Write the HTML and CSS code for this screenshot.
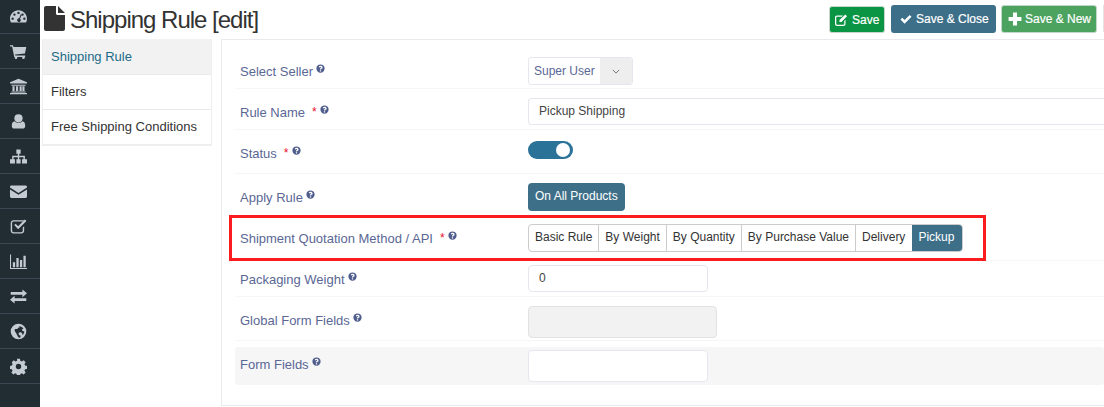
FILE: index.html
```html
<!DOCTYPE html>
<html lang="en">
<head>
<meta charset="utf-8">
<title>Shipping Rule [edit]</title>
<link rel="stylesheet" href="styles.css">
</head>
<body>
<svg class="defs" width="0" height="0" aria-hidden="true">
  <symbol id="help" viewBox="0 0 24 24"><path fill-rule="evenodd" d="M12 1a11 11 0 1 0 0 22 11 11 0 0 0 0-22zM10.300 16.500h3.400v3.300h-3.400zM12 4.500c3 0 5.500 1.800 5.500 4.600 0 2-1.100 3-2.400 3.800-.9.600-1.400 1-1.400 1.900h-3.400c0-2.300.9-3.200 2.200-4 .9-.6 1.500-1 1.500-1.700 0-.8-.8-1.400-1.800-1.400-1.100 0-1.900.6-2.600 1.500L7.200 7.100C8.300 5.500 9.900 4.500 12 4.500z"/></symbol>
</svg>
<div class="app">
  <nav class="rail">
    <a class="rail-item"><svg viewBox="0 0 24 24"><path fill-rule="evenodd" d="M12 3C5.400 3 0 8.300 0 15c0 2 .5 3.900 1.400 5.500h21.200c.9-1.600 1.400-3.500 1.400-5.500 0-6.700-5.400-12-12-12zM12 5.200a1.700 1.700 0 1 1 0 3.400 1.700 1.700 0 0 1 0-3.400zM6.300 7.600a1.700 1.700 0 1 1 0 3.400 1.700 1.700 0 0 1 0-3.400zM17.700 7.600a1.700 1.700 0 1 1 0 3.400 1.700 1.700 0 0 1 0-3.400zM3.700 13.300a1.700 1.700 0 1 1 0 3.400 1.700 1.700 0 0 1 0-3.400zM20.300 13.300a1.700 1.700 0 1 1 0 3.400 1.700 1.700 0 0 1 0-3.400zM15.400 8.300l1.300.5-2.500 6.300a2.600 2.600 0 1 1-1.300-.5z"/></svg></a>
    <a class="rail-item"><svg viewBox="0 0 24 24"><path d="M0 3h4.300l.6 2.500H23l-1.900 9.300-14 1.400.3 1.500h14v2H6L3 5H0z"/><circle cx="8.500" cy="20.800" r="1.900"/><circle cx="19" cy="20.800" r="1.900"/></svg></a>
    <a class="rail-item"><svg viewBox="0 0 24 24"><path d="M12 1 0 6v1.800h24V6zM2 9.500h20V11H2zM3.500 11.500h3v7h-3zM8.500 11.500h3v7h-3zM13.500 11.500h3v7h-3zM17.500 11.500h3v7h-3zM2 19h20v1.600H2zM0 21.200h24V23H0z"/></svg></a>
    <a class="rail-item"><svg viewBox="0 0 24 24"><circle cx="12" cy="7.500" r="5.800"/><path d="M6.500 11.500c1.400 1.500 3.300 2.300 5.500 2.300s4.100-.8 5.500-2.300c2.500.3 4 2.500 4 6.500 0 2.800-1.600 4-3.600 4H6.100c-2 0-3.600-1.200-3.600-4 0-4 1.500-6.200 4-6.500z"/></svg></a>
    <a class="rail-item"><svg viewBox="0 0 24 24"><path d="M9 2h6v6h-2v3h8v5h3v6h-7v-6h2v-3h-6v3h2v6H9v-6h2v-3H5v3h2v6H0v-6h3v-5h8V8H9z"/></svg></a>
    <a class="rail-item"><svg viewBox="0 0 24 24"><path d="M2 3.500h20c1.100 0 2 .9 2 2v1L12 14 0 6.500v-1c0-1.100.9-2 2-2zM0 9l12 7.500L24 9v10c0 1.100-.9 2-2 2H2c-1.100 0-2-.9-2-2z"/></svg></a>
    <a class="rail-item"><svg viewBox="0 0 24 24"><path d="M5 3h13c.7 0 1.300.1 1.900.4l-1.600 1.600H5c-1.100 0-2 .9-2 2v11c0 1.100.9 2 2 2h11c1.100 0 2-.9 2-2v-4.500l2-2V18c0 2.200-1.800 4-4 4H5c-2.200 0-4-1.800-4-4V7c0-2.200 1.800-4 4-4z"/><path d="m6 10 2-2 3.500 3.500L21 2l2.200 2.200L11.500 16z"/></svg></a>
    <a class="rail-item"><svg viewBox="0 0 24 24"><path d="M0 2h1.500v19H24v1.500H0zM4 13h3.200v7H4zM9 7h3.200v13H9zM14 10h3.200v10H14zM19 4h3.200v16H19z"/></svg></a>
    <a class="rail-item"><svg viewBox="0 0 24 24"><path d="M17.500 2 24 7.500 17.500 13V9.500H1v-4h16.500zM6.500 11v3.500H23v4H6.500V22L0 16.500z"/></svg></a>
    <a class="rail-item"><svg viewBox="0 0 24 24"><path fill-rule="evenodd" d="M12 1a11 11 0 1 0 0 22 11 11 0 0 0 0-22zM13 4.500c2.500.1 4.900 1.500 6.100 3.500l-1.600.6-.7 1.300 1.400 1.600 1.800.2c.4 1.100-.3 3-1.300 4.500l-1.500.5.200-2-1.900-1.700-2.600.5-1 1.800 1.600 2.400 1.700-.1-.6 2.700-2 .6c-1.400-1.300-2.600-3.500-3.200-5.200L6.500 11 7 8.500l3.500-.2.800-1.500 2.100-.3z"/></svg></a>
    <a class="rail-item"><svg viewBox="0 0 24 24"><path fill-rule="evenodd" d="M10 1h4l.6 3 2.100.9 2.600-1.700 2.800 2.800-1.700 2.600.9 2.100 3 .6v4l-3 .6-.9 2.100 1.700 2.600-2.800 2.800-2.600-1.700-2.100.9-.6 3h-4l-.6-3-2.100-.9-2.600 1.700-2.800-2.800 1.700-2.600-.9-2.100-3-.6v-4l3-.6.900-2.100L2.500 6l2.800-2.800 2.600 1.700 2.100-.9zM12 8.200a3.800 3.800 0 1 0 0 7.600 3.800 3.800 0 0 0 0-7.600z"/></svg></a>
  </nav>
  <div class="main">
    <header class="topbar">
      <h1 class="title"><svg class="title-icon" viewBox="0 0 21 25"><path d="M2 0h10v7.500c0 .8.700 1.500 1.500 1.500H21v14c0 1.100-.9 2-2 2H2c-1.100 0-2-.9-2-2V2C0 .9.900 0 2 0zM14 0l7 7h-7z"/></svg>Shipping Rule [edit]</h1>
      <div class="actions">
        <button class="btn btn-save"><svg viewBox="0 0 24 24"><path d="M4 3h12l-2.500 2.500H4c-.8 0-1.500.7-1.500 1.500v13c0 .8.700 1.500 1.500 1.500h13c.8 0 1.500-.7 1.500-1.500v-6L21 11.500V20c0 2.200-1.800 4-4 4H4c-2.200 0-4-1.800-4-4V7c0-2.200 1.800-4 4-4z"/><path d="M20.500 1 24 4.500 13 16H9v-4z"/></svg>Save</button>
        <button class="btn btn-close"><svg viewBox="0 0 24 24"><path d="m1 13 3.500-3.500 4.700 4.700L19.500 4 23 7.500 9.200 21.300z"/></svg>Save &amp; Close</button>
        <button class="btn btn-new"><svg viewBox="0 0 24 24"><path d="M8.500 1h7v7.500H23v7h-7.500V23h-7v-7.500H1v-7h7.500z"/></svg>Save &amp; New</button>
        <span class="btn-edge"></span>
      </div>
    </header>
    <div class="content">
      <ul class="tabs">
        <li class="tab tab-active">Shipping Rule</li>
        <li class="tab">Filters</li>
        <li class="tab">Free Shipping Conditions</li>
      </ul>
      <section class="panel">
        <div class="row row-seller">
          <div class="label">Select Seller<svg class="help"><use href="#help"/></svg></div>
          <div class="select"><span class="select-value">Super User</span><span class="select-arrow"><svg viewBox="0 0 10 6"><path d="M1 1l4 4 4-4" fill="none" stroke="#5f6872" stroke-width="1.100"/></svg></span></div>
        </div>
        <div class="row row-name">
          <div class="label">Rule Name<span class="req">*</span><svg class="help"><use href="#help"/></svg></div>
          <div class="input input-full">Pickup Shipping</div>
        </div>
        <div class="row row-status">
          <div class="label">Status<span class="req">*</span><svg class="help"><use href="#help"/></svg></div>
          <div class="toggle"><span class="knob"></span></div>
        </div>
        <div class="row row-apply">
          <div class="label">Apply Rule<svg class="help"><use href="#help"/></svg></div>
          <div class="group"><span class="seg seg-on">On All Products</span></div>
        </div>
        <div class="row row-method">
          <div class="label">Shipment Quotation Method / API<span class="req">*</span><svg class="help"><use href="#help"/></svg></div>
          <div class="group">
            <span class="seg">Basic Rule</span><span class="seg">By Weight</span><span class="seg">By Quantity</span><span class="seg">By Purchase Value</span><span class="seg seg-delivery">Delivery</span><span class="seg seg-on seg-pickup">Pickup</span>
          </div>
          <div class="highlight"></div>
        </div>
        <div class="row row-weight">
          <div class="label">Packaging Weight<svg class="help"><use href="#help"/></svg></div>
          <div class="input input-weight">0</div>
        </div>
        <div class="row row-global">
          <div class="label">Global Form Fields<svg class="help"><use href="#help"/></svg></div>
          <div class="input input-disabled"></div>
        </div>
        <div class="row row-form">
          <div class="label">Form Fields<svg class="help"><use href="#help"/></svg></div>
          <div class="input input-form"></div>
        </div>
      </section>
    </div>
  </div>
</div>
</body>
</html>
```
FILE: styles.css
```css
* { box-sizing: border-box; }
html, body { margin: 0; height: 100%; overflow: hidden; }
body { font-family: "Liberation Sans", Arial, sans-serif; font-size: 13px; background: #fff; color: #333; }
.defs { position: absolute; }
.app { display: flex; width: 1104px; height: 407px; }

.rail { flex: 0 0 40px; background: #212c33; display: flex; flex-direction: column; }
.rail-item { height: 35px; flex: none; display: flex; align-items: center; justify-content: center; padding-right: 3px; border-bottom: 1px solid #3a4853; }
.rail-item:first-child { height: 34px; }
.rail-item svg { width: 17px; height: 17px; fill: #c5ccd1; }

.main { flex: 1; min-width: 0; display: flex; flex-direction: column; }
.topbar { height: 39px; flex: none; display: flex; align-items: flex-start; justify-content: space-between; padding: 5px 0 0 4px; }
.title { margin: 0; display: flex; align-items: flex-start; gap: 5px; font-size: 24px; font-weight: 400; line-height: 30px; letter-spacing: -1px; color: #333; }
.title-icon { width: 21px; height: 25px; fill: #333; margin-top: 1px; }
.actions { display: flex; align-items: flex-start; gap: 6px; }
.btn { height: 27px; border: 1px solid transparent; border-radius: 3px; color: #fff; font: 400 12px "Liberation Sans", Arial, sans-serif; -webkit-text-stroke: .2px #fff; display: flex; align-items: center; padding: 0 5px; white-space: nowrap; }
.btn svg { fill: #fff; flex: none; }
.btn-save { width: 56px; margin-top: 1px; background: #0a9544; border-color: #c9d6cd; padding-left: 5px; gap: 5px; }
.btn-save svg { width: 12px; height: 12px; }
.btn-close { width: 105px; height: 28px; background: #3e6f89; padding-left: 8px; gap: 4px; margin-right: -1px; }
.btn-close svg { width: 12px; height: 12px; }
.btn-new { width: 96px; height: 28px; background: #4ba35f; border-color: #c2d7c7; padding-left: 6px; gap: 3px; }
.btn-new svg { width: 14px; height: 14px; }
.btn-edge { width: 1px; height: 27px; background: #e3e3e3; }

.content { flex: 1; min-height: 0; display: flex; align-items: flex-start; padding-left: 2px; }
.tabs { list-style: none; margin: 0; padding: 0; width: 170px; flex: none; border: 1px solid #eee; border-width: 0 1px 2px 1px; }
.tab { height: 35px; padding-left: 8px; line-height: 34px; border-bottom: 1px solid #eaeaea; font-size: 13px; color: #333; }
.tab:last-child { height: 34px; border-bottom: 0; }
.tab-active { height: 36px; line-height: 36px; background: #f2f2f2; color: #1c6a88; }

.panel { margin-left: 9px; flex: 1; height: 367px; border: 1px solid #e9e9ee; border-right: 0; padding: 8px 0 0 13px; position: relative; }
.row { display: flex; position: relative; border-bottom: 1px solid #f6f6f6; padding-left: 5px; }
.label { width: 288px; flex: none; color: #5a6795; font-size: 13px; line-height: 16px; display: flex; align-items: flex-start; padding-top: 7px; }
.help { width: 9px; height: 9px; fill: #4f5d8d; margin-left: 3px; }
.req { color: #e8112d; font-size: 12px; margin-left: 7px; line-height: 14px; }
.req + .help { margin-left: 3px; }

.row-seller { height: 41px; padding-top: 9px; }
.row-name { height: 41px; padding-top: 9px; }
.row-status { height: 44px; padding-top: 11px; }
.row-status .label { padding-top: 5px; }
.row-apply { height: 41px; padding-top: 9px; border-bottom: 0; }
.row-method { height: 46px; padding-top: 9px; }
.row-weight { height: 36px; padding-top: 4px; }
.row-global { height: 44px; padding-top: 9px; }
.row-form { height: 38px; margin-top: 6px; padding-top: 3px; background: #f6f6f7; border-bottom: 0; border-radius: 3px; }

.select { display: flex; width: 105px; height: 28px; border: 1px solid #e6e6ee; border-radius: 3px; font-size: 12px; color: #5a6795; overflow: hidden; }
.select-value { flex: 1; padding-left: 5px; line-height: 27px; white-space: nowrap; }
.select-arrow { width: 32px; background: #eeeeee; display: flex; align-items: center; justify-content: center; }
.select-arrow svg { width: 8px; height: 5px; }

.input { border: 1px solid #e6e6ee; border-radius: 4px; background: #fff; font-size: 12px; color: #444; padding-left: 10px; line-height: 25px; }
.input-full { flex: 1; height: 27px; border-right: 0; border-radius: 4px 0 0 4px; }
.input-weight { width: 180px; height: 27px; }
.input-disabled { width: 189px; height: 32px; background: #f2f2f2; border-color: #e2e2e2; }
.input-form { width: 180px; height: 32px; }

.toggle { width: 45px; height: 18px; border-radius: 9px; background: #2a7298; position: relative; }
.knob { position: absolute; right: 3px; top: 2px; width: 14px; height: 14px; border-radius: 50%; background: #fff; }

.group { display: inline-flex; align-self: flex-start; height: 28px; border: 1px solid #cccccc; border-radius: 4px; overflow: hidden; font-size: 12px; }
.seg { padding: 0 6px; line-height: 25px; color: #333; border-left: 1px solid #cccccc; white-space: nowrap; }
.seg:first-child { border-left: 0; }
.seg-on { background: #3e6f89; color: #fff; border-left: 0; }
.seg-delivery { padding-right: 7px; }
.seg-pickup { padding-right: 8px; }
.row-apply .group { border: 0; }
.row-apply .seg { line-height: 27px; padding: 0 7px; }

.highlight { position: absolute; left: -6px; top: 0; width: 757px; height: 46px; border: 3px solid #fb1c1f; pointer-events: none; }
```
